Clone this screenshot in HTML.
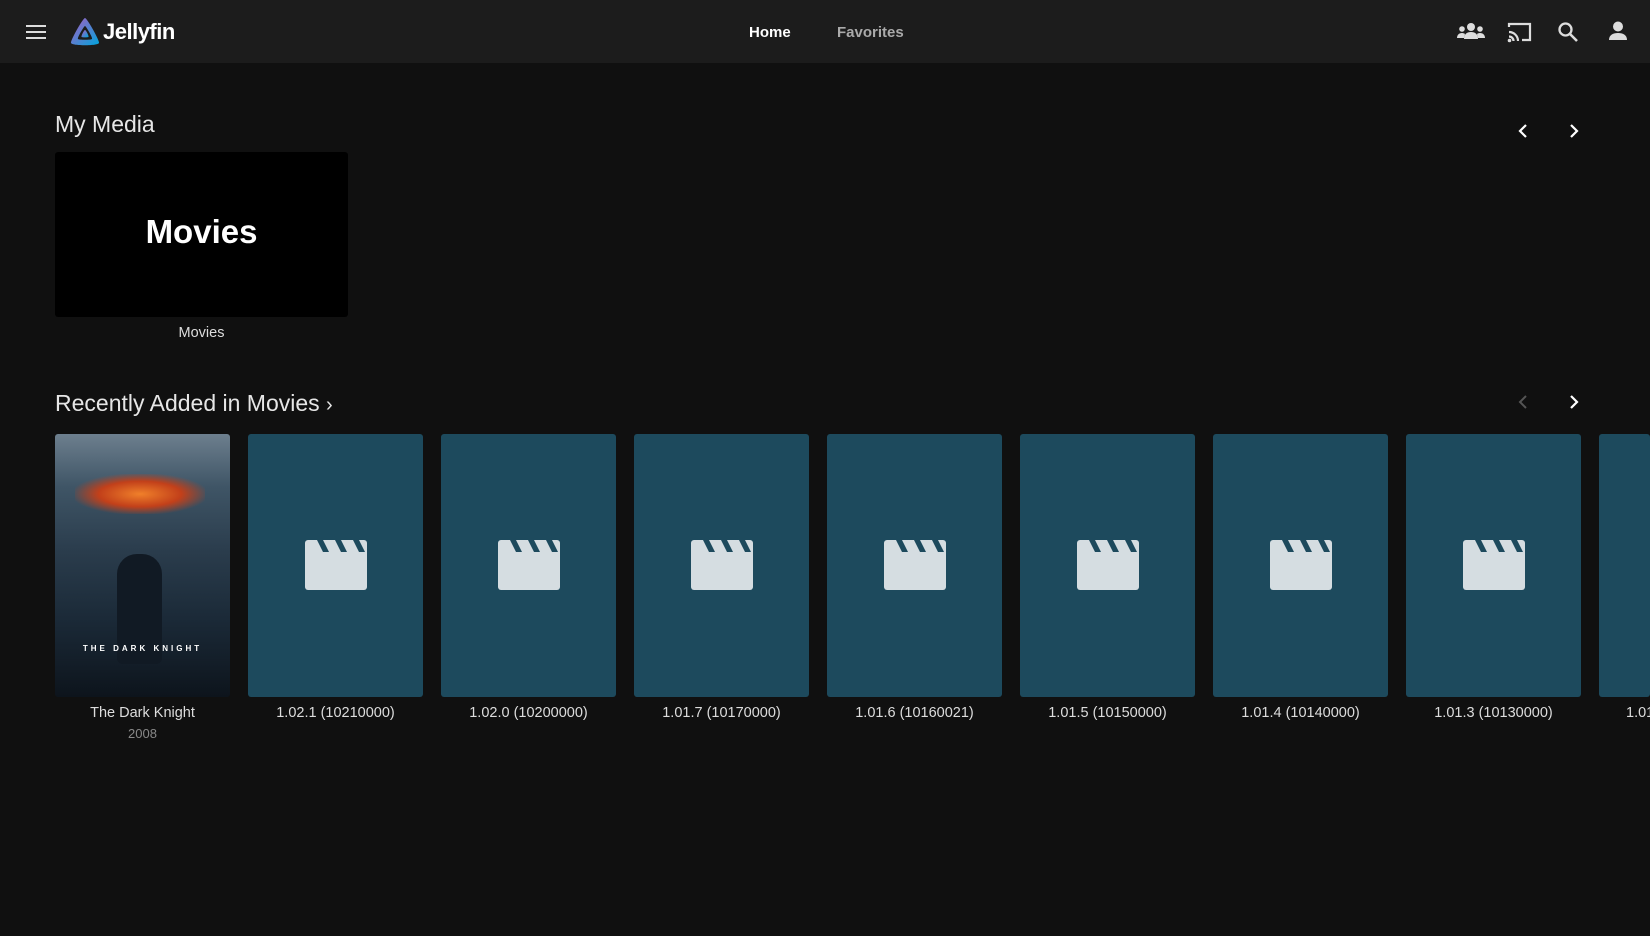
<!DOCTYPE html>
<html><head><meta charset="utf-8"><style>
*{margin:0;padding:0;box-sizing:border-box}
html,body{width:1650px;height:936px;overflow:hidden}
body{background:#101010;font-family:"Liberation Sans",sans-serif;color:#ddd;position:relative}
#wrap{position:absolute;left:0;top:0;width:1650px;height:936px;overflow:hidden}
.hdr{position:absolute;left:0;top:0;width:1650px;height:63px;background:#1c1c1c}
.abs{position:absolute}
.sec{position:absolute;left:55px;font-size:23px;color:#e6e6e6}
.card{position:absolute;top:434px;width:175px;height:263px;border-radius:3px;background:#1d4a5d;overflow:hidden}
.lbl{position:absolute;top:705px;width:175px;text-align:center;font-size:14.5px;color:#ddd;white-space:nowrap}
.clap{position:absolute;left:57px;top:106px}
</style></head><body><div id="wrap">
<div class="hdr"></div>
<svg class="abs" style="left:26px;top:24px" width="20" height="16" viewBox="0 0 20 16"><rect y="1" width="20" height="2" fill="#ddd"/><rect y="7" width="20" height="2" fill="#ddd"/><rect y="13" width="20" height="2" fill="#ddd"/></svg>
<svg class="abs" style="left:69px;top:17px" width="32" height="30" viewBox="0 0 32 30"><defs><linearGradient id="g" x1="0" y1="0" x2="1" y2="1"><stop offset="0" stop-color="#aa5cc3"/><stop offset="1" stop-color="#00a4dc"/></linearGradient></defs><path d="M16 1 C14 1 1 24 2 26 C3 29 29 29 30 26 C31 24 18 1 16 1Z M16 9 C17 9 24 21 23 22 C22 23 10 23 9 22 C8 21 15 9 16 9Z" fill="url(#g)" fill-rule="evenodd"/><path d="M16 13 C15 13 12 19 12.5 20 C13 20.5 19 20.5 19.5 20 C20 19 17 13 16 13Z" fill="url(#g)"/></svg>
<div class="abs" style="left:103px;top:19px;font-size:22px;font-weight:bold;color:#fff;letter-spacing:-0.5px">Jellyfin</div>
<div class="abs" style="left:749px;top:24px;font-size:15px;font-weight:bold;color:#fff">Home</div>
<div class="abs" style="left:837px;top:24px;font-size:15px;font-weight:bold;color:#aaa">Favorites</div>
<svg class="abs" style="left:1457px;top:22px" width="28" height="18" viewBox="0 0 28 18"><g fill="#ddd"><circle cx="14" cy="5" r="4"/><path d="M7 17c0-5 3-7 7-7s7 2 7 7z"/><circle cx="5" cy="7" r="2.8"/><path d="M0 16c0-3 2-5 5-5 1.5 0 2.5.5 3 1l-1 4z"/><circle cx="23" cy="7" r="2.8"/><path d="M28 16c0-3-2-5-5-5-1.5 0-2.5.5-3 1l1 4z"/></g></svg>
<svg class="abs" style="left:1507px;top:21px" width="26" height="22" viewBox="0 0 26 22"><g fill="none" stroke="#ddd" stroke-width="2.2"><path d="M2 6V3h21v16h-8"/><path d="M2 11a9 9 0 0 1 9 9"/><path d="M2 15.5a4.5 4.5 0 0 1 4.5 4.5"/></g><circle cx="2.5" cy="19.5" r="1.8" fill="#ddd"/></svg>
<svg class="abs" style="left:1557px;top:21px" width="22" height="22" viewBox="0 0 22 22"><circle cx="8.5" cy="8.5" r="6" fill="none" stroke="#ddd" stroke-width="2.3"/><path d="M13 13l7 7" stroke="#ddd" stroke-width="2.6"/></svg>
<svg class="abs" style="left:1608px;top:21px" width="20" height="20" viewBox="0 0 20 20"><circle cx="10" cy="5.5" r="5" fill="#ddd"/><path d="M1 19c0-5 4-7 9-7s9 2 9 7z" fill="#ddd"/></svg>

<div class="sec" style="top:111px">My Media</div>
<svg class="abs" style="left:1515px;top:122px" width="18" height="18" viewBox="0 0 18 18"><path d="M11 3l-6 6 6 6" fill="none" stroke="#fff" stroke-width="2.2"/></svg>
<svg class="abs" style="left:1564px;top:122px" width="18" height="18" viewBox="0 0 18 18"><path d="M7 3l6 6-6 6" fill="none" stroke="#fff" stroke-width="2.2"/></svg>
<div class="abs" style="left:55px;top:152px;width:293px;height:165px;background:#000;border-radius:3px"></div>
<div class="abs" style="left:55px;top:213px;width:293px;text-align:center;font-size:33px;font-weight:bold;color:#fff">Movies</div>
<div class="abs" style="left:55px;top:325px;width:293px;text-align:center;font-size:14.5px;color:#ddd">Movies</div>

<div class="sec" style="top:390px">Recently Added in Movies <span style="font-size:20px">›</span></div>
<svg class="abs" style="left:1515px;top:393px" width="18" height="18" viewBox="0 0 18 18"><path d="M11 3l-6 6 6 6" fill="none" stroke="#555" stroke-width="2"/></svg>
<svg class="abs" style="left:1564px;top:393px" width="18" height="18" viewBox="0 0 18 18"><path d="M7 3l6 6-6 6" fill="none" stroke="#fff" stroke-width="2.2"/></svg>

<div class="card" style="left:55px;background:linear-gradient(180deg,#6d7f8e 0%,#3f5566 20%,#2a3c4c 45%,#1b2a38 70%,#0d141c 100%)">
<div class="abs" style="left:20px;top:40px;width:130px;height:40px;background:radial-gradient(ellipse,#f0802a 0%,#c2401a 45%,transparent 75%)"></div>
<div class="abs" style="left:62px;top:120px;width:45px;height:110px;background:#111a24;border-radius:20px 20px 6px 6px"></div>
<div class="abs" style="left:0;top:210px;width:175px;text-align:center;font-size:8px;letter-spacing:3px;color:#fff;font-weight:bold">THE DARK KNIGHT</div>
</div>
<div class="lbl" style="left:55px">The Dark Knight</div>
<div class="lbl" style="left:55px;top:726px;font-size:13px;color:#888">2008</div>

<div id="c"></div>
</div>
<script>
var t=["1.02.1 (10210000)","1.02.0 (10200000)","1.01.7 (10170000)","1.01.6 (10160021)","1.01.5 (10150000)","1.01.4 (10140000)","1.01.3 (10130000)","1.01.2 (10120000)"];
var h="";
for(var i=0;i<8;i++){var x=55+193*(i+1);var w=Math.min(175,1650-x);
h+='<div class="card" style="left:'+x+'px;width:'+w+'px"><svg class="clap" width="62" height="50" viewBox="0 0 62 50"><path d="M3 0h56a3 3 0 0 1 3 3v44a3 3 0 0 1-3 3H3a3 3 0 0 1-3-3V3a3 3 0 0 1 3-3z" fill="#d5dde1"/><path d="M12 0h6l6 12h-6zM30 0h6l6 12h-6zM48 0h6l6 12h-6z" fill="#1d4a5d"/></svg></div><div class="lbl" style="left:'+x+'px;width:'+w+'px;overflow:hidden;text-align:'+(w<175?'left;padding-left:27px':'center')+'">'+t[i]+'</div>';}
document.getElementById("c").innerHTML=h;
</script>
</body></html>
